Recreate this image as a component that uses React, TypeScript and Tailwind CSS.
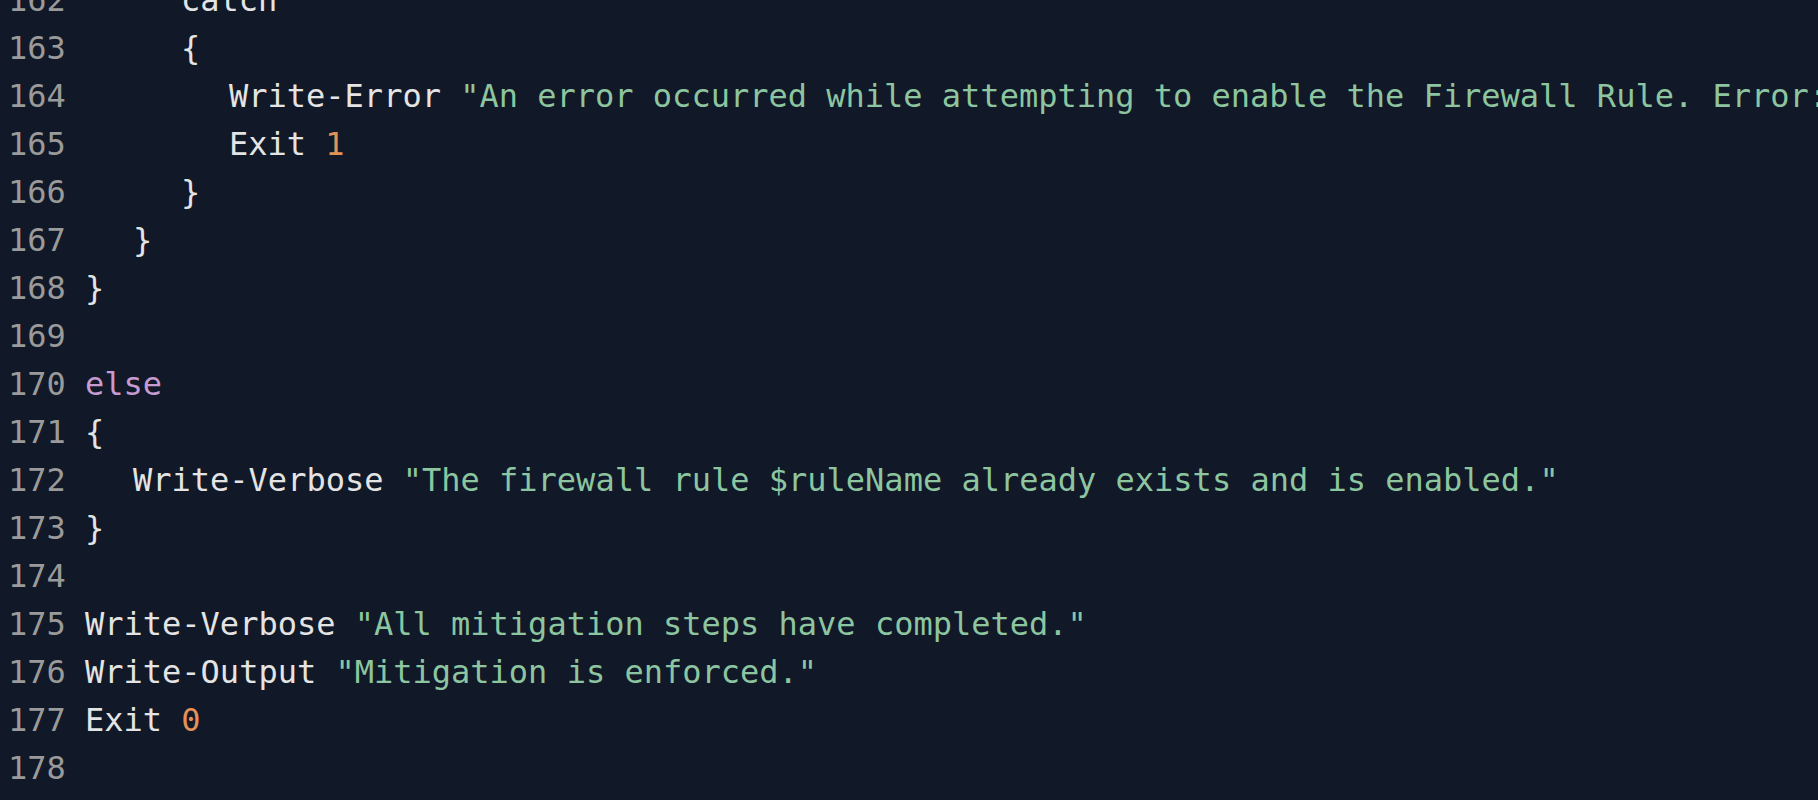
type Tok = { t: string; c?: "str" | "num" | "kw" };

const lines: { n: number; indent: number; toks: Tok[] }[] = [
  { n: 162, indent: 2, toks: [{ t: "catch" }] },
  { n: 163, indent: 2, toks: [{ t: "{" }] },
  { n: 164, indent: 3, toks: [{ t: "Write-Error " }, { t: '"An error occurred while attempting to enable the Firewall Rule. Error: $_"', c: "str" }] },
  { n: 165, indent: 3, toks: [{ t: "Exit " }, { t: "1", c: "num" }] },
  { n: 166, indent: 2, toks: [{ t: "}" }] },
  { n: 167, indent: 1, toks: [{ t: "}" }] },
  { n: 168, indent: 0, toks: [{ t: "}" }] },
  { n: 169, indent: 0, toks: [] },
  { n: 170, indent: 0, toks: [{ t: "else", c: "kw" }] },
  { n: 171, indent: 0, toks: [{ t: "{" }] },
  { n: 172, indent: 1, toks: [{ t: "Write-Verbose " }, { t: '"The firewall rule $ruleName already exists and is enabled."', c: "str" }] },
  { n: 173, indent: 0, toks: [{ t: "}" }] },
  { n: 174, indent: 0, toks: [] },
  { n: 175, indent: 0, toks: [{ t: "Write-Verbose " }, { t: '"All mitigation steps have completed."', c: "str" }] },
  { n: 176, indent: 0, toks: [{ t: "Write-Output " }, { t: '"Mitigation is enforced."', c: "str" }] },
  { n: 177, indent: 0, toks: [{ t: "Exit " }, { t: "0", c: "num" }] },
  { n: 178, indent: 0, toks: [] },
];

const indentCls = ["pl-0", "pl-[48px]", "pl-[96px]", "pl-[144px]"];

const tokCls = (c?: Tok["c"]) =>
  c === "str"
    ? "text-[#8cc5a0]"
    : c === "num"
      ? "text-[#e39257]"
      : c === "kw"
        ? "text-[#c79bcf]"
        : "text-[#e4e4e4]";

export default function App() {
  return (
    <main className="w-[1818px] h-[800px] overflow-hidden bg-[#111827]">
      <div className="-mt-[24px] font-['DejaVu_Sans_Mono','Liberation_Mono',monospace] text-[32px] leading-[48px] whitespace-pre">
        {lines.map((l) => (
          <div key={l.n} className="flex h-[48px]">
            <span className="ml-[8px] w-[58px] shrink-0 text-[#9a9a9a]">{l.n}</span>
            <span className={`ml-[19px] ${indentCls[l.indent]}`}>
              {l.toks.map((tk, i) => (
                <span key={i} className={tokCls(tk.c)}>
                  {tk.t}
                </span>
              ))}
            </span>
          </div>
        ))}
      </div>
    </main>
  );
}
